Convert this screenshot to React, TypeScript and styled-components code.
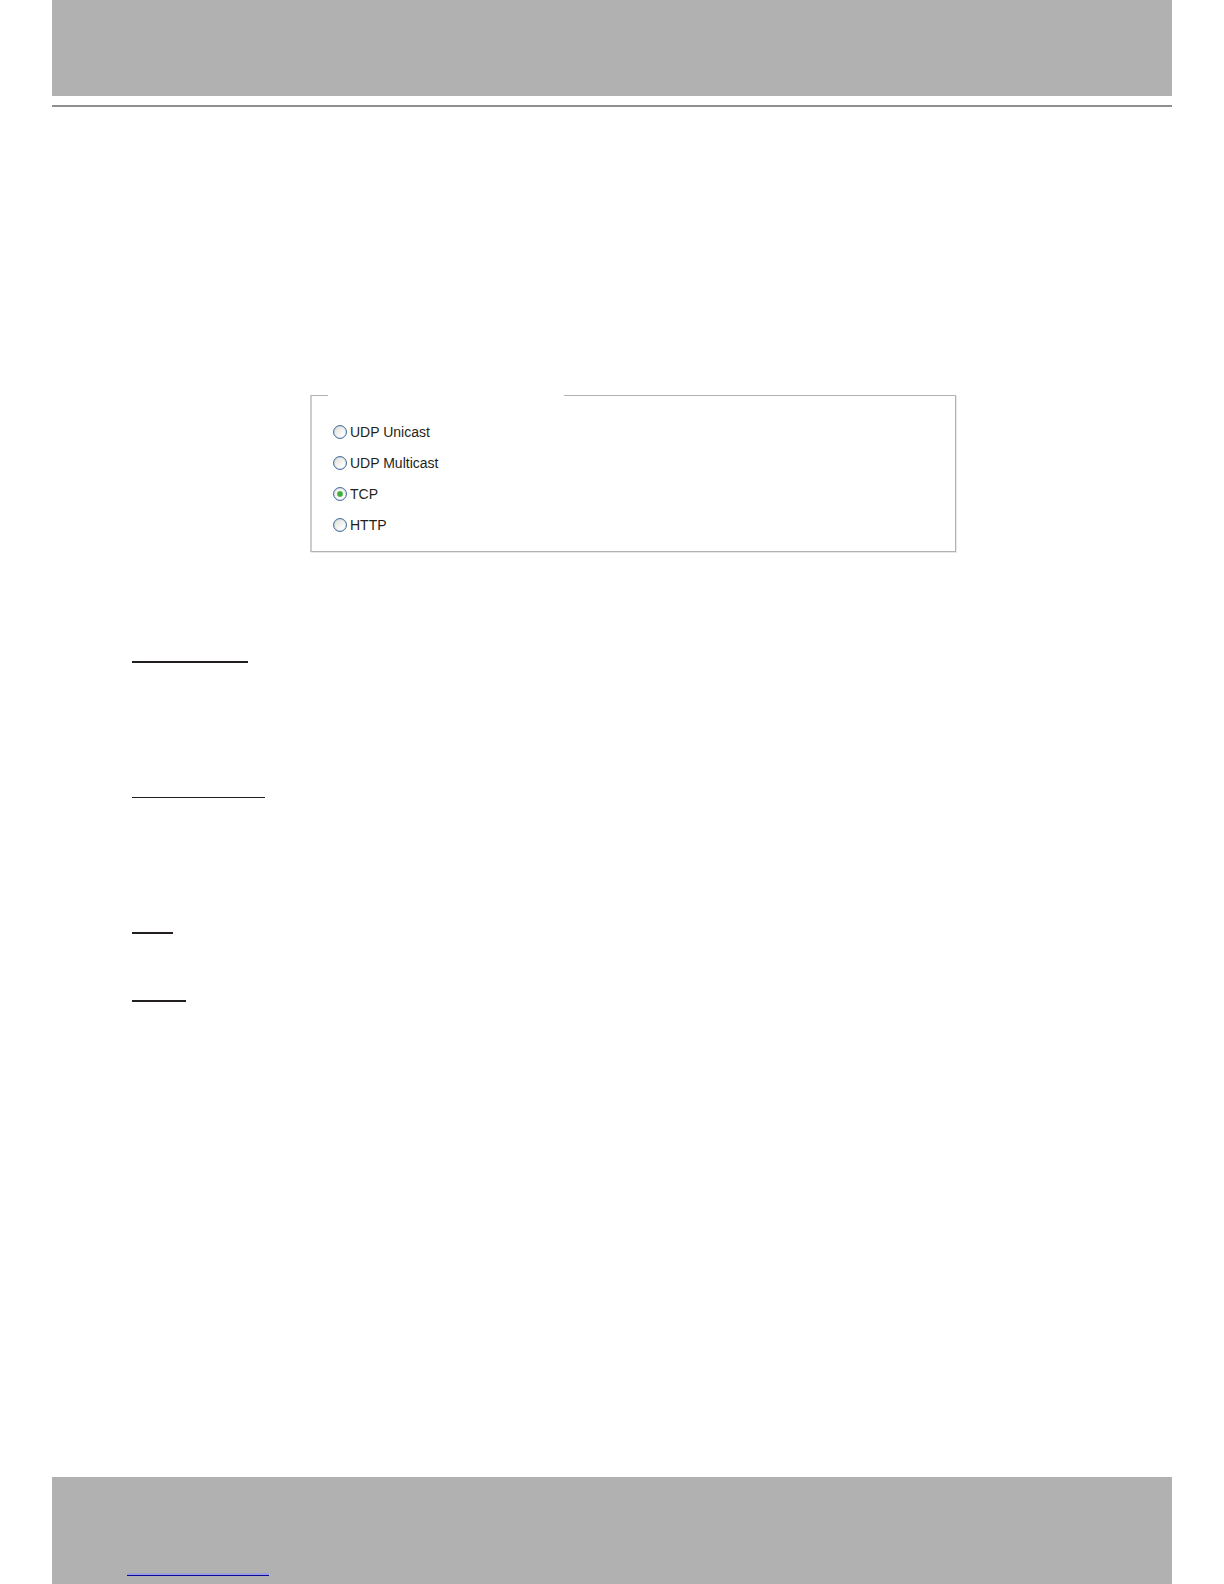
import React, { useState } from 'react';
import styled, { createGlobalStyle } from 'styled-components';

const GlobalStyle = createGlobalStyle`
  *, *::before, *::after {
    box-sizing: border-box;
  }

  body {
    margin: 0;
    background: #ffffff;
    color: #231f20;
    font-family: "Liberation Sans", Arial, sans-serif;
  }
`;

const Page = styled.div`
  display: flex;
  flex-direction: column;
  min-height: 100vh;
  padding: 0 52px;
`;

const Header = styled.header`
  padding-bottom: 9px;
  border-bottom: 2px solid #8e8e8e;
`;

const HeaderBand = styled.div`
  height: 96px;
  background: #b1b1b1;
`;

const Content = styled.main`
  display: flex;
  flex: 1;
  flex-direction: column;
  gap: 109px;
  padding: 278px 80px 0;
`;

const Group = styled.fieldset`
  min-width: 0;
  margin: 0 136px 0 178px;
  padding: 0 16px;
  border: 1px solid #b2b2b2;
  border-left: 2px solid #cccccc;
  box-shadow: 1px 1px 0 #e8e8e8;
`;

const GroupLegend = styled.legend`
  width: 236px;
  height: 20px;
  padding: 0;
`;

const Options = styled.div`
  display: flex;
  flex-direction: column;
  padding: 11px 5px;
`;

const Option = styled.label`
  display: flex;
  align-items: center;
  align-self: flex-start;
  gap: 3px;
  height: 31px;
  font-size: 14px;
  line-height: 16px;
`;

const Radio = styled.input`
  appearance: none;
  width: 14px;
  height: 14px;
  margin: 0;
  border: 1px solid #496f9c;
  border-radius: 50%;
  background: linear-gradient(135deg, #dcdcd6, #ffffff 80%);
  box-shadow: inset 0 0 1px #6f8fb5;

  &:checked {
    background:
      radial-gradient(circle, #3fae38 0 2px, #8fd288 3px, transparent 3px),
      linear-gradient(135deg, #ecece8, #ffffff 80%);
  }
`;

const Sections = styled.div`
  display: flex;
  flex-direction: column;
`;

const Section = styled.section<{ $space: number }>`
  min-height: ${({ $space }) => $space}px;
`;

const Rule = styled.hr<{ $width: number; $weight: number }>`
  width: ${({ $width }) => $width}px;
  height: ${({ $weight }) => $weight}px;
  margin: 0;
  border: 0;
  background: #231f20;
`;

const Footer = styled.footer`
  display: flex;
  align-items: flex-end;
  height: 107px;
  padding: 0 75px 8px;
  background: #b1b1b1;
`;

const FooterLink = styled.a`
  width: 142px;
  height: 16px;
  border-bottom: 1px solid #0b0b9b;
  box-shadow: inset 0 -2px 0 #9d9ddd;
`;

const protocols = ['UDP Unicast', 'UDP Multicast', 'TCP', 'HTTP'];

const sections = [
  { id: 'unicast', width: 116, weight: 2, space: 136 },
  { id: 'multicast', width: 133, weight: 1, space: 135 },
  { id: 'tcp', width: 41, weight: 2, space: 68 },
  { id: 'http', width: 54, weight: 2, space: 68 },
];

export default function App() {
  const [selected, setSelected] = useState('TCP');

  return (
    <>
      <GlobalStyle />
      <Page>
        <Header>
          <HeaderBand />
        </Header>
        <Content>
          <Group>
            <GroupLegend />
            <Options>
              {protocols.map((protocol) => (
                <Option key={protocol}>
                  <Radio
                    type="radio"
                    name="protocol"
                    value={protocol}
                    checked={selected === protocol}
                    onChange={() => setSelected(protocol)}
                  />
                  {protocol}
                </Option>
              ))}
            </Options>
          </Group>
          <Sections>
            {sections.map(({ id, width, weight, space }) => (
              <Section key={id} $space={space}>
                <Rule $width={width} $weight={weight} />
              </Section>
            ))}
          </Sections>
        </Content>
        <Footer>
          <FooterLink href="#" />
        </Footer>
      </Page>
    </>
  );
}
